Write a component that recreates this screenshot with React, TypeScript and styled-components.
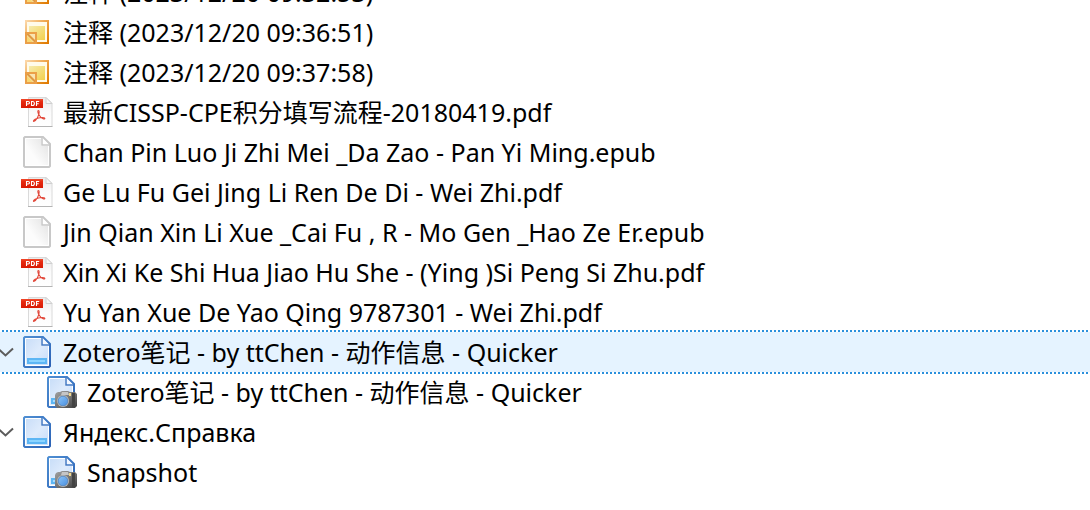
import React, { useState } from 'react';
import styled, { createGlobalStyle } from 'styled-components';

const GlobalStyle = createGlobalStyle`
  body {
    margin: 0;
    background: #fff;
    overflow: hidden;
  }
`;

const Tree = styled.ul`
  list-style: none;
  margin: -28px 0 0;
  padding: 0;
  color: #000;
  font-family: 'Noto Sans', 'Noto Sans CJK SC', sans-serif;
  font-size: 25px;
  line-height: 40px;
`;

const Row = styled.li<{ $level: number; $selected: boolean }>`
  display: flex;
  align-items: center;
  height: 40px;
  padding-left: ${({ $level }) => $level * 24}px;
  white-space: nowrap;
  background: ${({ $selected }) => ($selected ? '#e5f3ff' : 'transparent')};
  outline: ${({ $selected }) => ($selected ? '2px dotted #2b90dc' : 'none')};
`;

const ToggleSlot = styled.span`
  display: flex;
  flex: none;
  width: 21px;
`;

const Toggle = styled.button`
  display: flex;
  width: 16px;
  height: 16px;
  padding: 0;
  border: 0;
  background: none;
`;

const Icon = styled.svg`
  flex: none;
  width: 32px;
  height: 32px;
  margin-right: 10px;
`;

const Label = styled.span`
  flex: none;
`;

const Defs = styled.svg`
  display: block;
  width: 0;
  height: 0;
`;

const Gradients = () => (
  <Defs aria-hidden="true">
    <defs>
      <linearGradient id="noteFrame" x1="0" y1="0" x2="1" y2="1">
        <stop offset="0" stopColor="#fbd7a8" />
        <stop offset="0.5" stopColor="#eda044" />
        <stop offset="1" stopColor="#e07a00" />
      </linearGradient>
      <linearGradient id="noteFill" x1="0" y1="0" x2="1" y2="1">
        <stop offset="0" stopColor="#f6ecae" />
        <stop offset="1" stopColor="#f3d04c" />
      </linearGradient>
      <linearGradient id="pdfPage" x1="0" y1="0" x2="0" y2="1">
        <stop offset="0" stopColor="#e9e9ea" />
        <stop offset="0.5" stopColor="#fbfbfb" />
        <stop offset="1" stopColor="#ffffff" />
      </linearGradient>
      <linearGradient id="pdfRed" x1="0" y1="0" x2="0" y2="1">
        <stop offset="0" stopColor="#f04a2c" />
        <stop offset="0.3" stopColor="#e62a10" />
        <stop offset="1" stopColor="#d81a04" />
      </linearGradient>
      <linearGradient id="blankFill" x1="0.3" y1="0.6" x2="1" y2="0">
        <stop offset="0" stopColor="#fcfcfc" />
        <stop offset="1" stopColor="#e2e2e2" />
      </linearGradient>
      <linearGradient id="pageFill" x1="0" y1="0" x2="1" y2="1">
        <stop offset="0" stopColor="#c9def8" />
        <stop offset="0.5" stopColor="#deebfc" />
        <stop offset="1" stopColor="#c6dcfa" />
      </linearGradient>
      <linearGradient id="pageEdge" x1="0" y1="0" x2="1" y2="1">
        <stop offset="0" stopColor="#4f8fd3" />
        <stop offset="1" stopColor="#2b62b5" />
      </linearGradient>
      <linearGradient id="cameraBody" x1="0" y1="0" x2="1" y2="1">
        <stop offset="0" stopColor="#a3a3a3" />
        <stop offset="0.5" stopColor="#747474" />
        <stop offset="1" stopColor="#3c3c3c" />
      </linearGradient>
      <linearGradient id="lens" x1="0" y1="0" x2="1" y2="1">
        <stop offset="0" stopColor="#8cc4f8" />
        <stop offset="1" stopColor="#4a90e0" />
      </linearGradient>
    </defs>
  </Defs>
);

const NoteIcon = () => (
  <Icon viewBox="0 0 32 32" aria-hidden="true">
    <rect x="5" y="5" width="22" height="22" fill="#fffbea" stroke="url(#noteFrame)" strokeWidth="2" />
    <rect x="8" y="10" width="16" height="14" fill="url(#noteFill)" />
    <rect x="5" y="17" width="10" height="10" fill="#f9e3b0" stroke="#eb9f48" strokeWidth="2" />
    <path d="M6 18h2l6 6v2h-1l-7-7z" fill="#df9a40" />
    <path d="M6 20l6 6H6z" fill="#f7d873" />
  </Icon>
);

const PdfIcon = () => (
  <Icon viewBox="0 0 32 32" aria-hidden="true">
    <path d="M7.500 1.500H25l6 6v23H7.500z" fill="url(#pdfPage)" stroke="#dadada" />
    <path d="M25 1.500v6h6z" fill="#f7f7f7" stroke="#d0d0d0" />
    <path d="M7 30.500h24.500" stroke="#b4b4b4" />
    <rect x="0" y="3" width="22" height="9" fill="url(#pdfRed)" />
    <path
      d="M5.500 10V5.500H7.200q1.300 0 1.300 1.200T7.200 8H5.500M10.500 5.500v4h1q1.900 0 1.900-2t-1.900-2zM15.500 10V5.500h2.700M15.500 7.700h2.200"
      fill="none"
      stroke="#fff"
      strokeWidth="1.100"
    />
    <path
      d="M17.500 14.500c-1 0-.8 2 .3 4 1.200 2.200 2.800 4 4.700 4.500 1.800.4 1.900-1.200-.2-1.400-2.500-.3-5.700.4-8.200 1.700-2 1.100-2 2.400-1 2 1.500-.6 3.500-3.500 4.600-6.700.6-1.800.7-4.100-.2-4.100z"
      fill="none"
      stroke="#e2483a"
      strokeWidth="1.100"
    />
  </Icon>
);

const BlankIcon = () => (
  <Icon viewBox="0 0 32 32" aria-hidden="true">
    <path d="M4 1h18l7 7v22l-1 1H4l-1-1V2z" fill="#fff" stroke="#c8c8c8" strokeWidth="2" />
    <path d="M5 3h15v7h7v19H5z" fill="url(#blankFill)" />
    <path d="M21 2v7h7" fill="#fff" stroke="#c8c8c8" strokeWidth="1.500" />
  </Icon>
);

const PageShape = () => (
  <>
    <path d="M4 1h18l7 7v22l-1 1H4l-1-1V2z" fill="#fff" stroke="url(#pageEdge)" strokeWidth="2" />
    <path d="M5 3h15v7h7v19H5z" fill="url(#pageFill)" />
    <path d="M21 2v7h7" fill="#f4f8ff" stroke="#4178c4" strokeWidth="1.500" />
  </>
);

const WebPageIcon = () => (
  <Icon viewBox="0 0 32 32" aria-hidden="true">
    <PageShape />
    <rect x="6" y="22" width="20" height="6" fill="#5db6f4" />
    <rect x="8" y="24" width="16" height="2" fill="#8bd4ff" />
  </Icon>
);

const SnapshotIcon = () => (
  <Icon viewBox="0 0 32 32" aria-hidden="true">
    <PageShape />
    <rect x="6" y="22" width="6" height="6" fill="#5db6f4" />
    <rect x="8" y="24" width="4" height="2" fill="#a5dcff" />
    <path d="M11 17l2-1h2l2-1h6l2 1h5l2 2v12l-2 2H12l-2-2V19z" fill="url(#cameraBody)" />
    <path d="M17 16h6l1 3h-8z" fill="#c5c5c5" />
    <path d="M27 17h3v14h-3z" fill="#434343" />
    <rect x="24" y="17" width="2" height="3" fill="#f3d88a" />
    <circle cx="18" cy="25" r="6" fill="#bdbab5" />
    <circle cx="18" cy="25" r="4.800" fill="url(#lens)" stroke="#5c8cc4" />
  </Icon>
);

type Kind = 'note' | 'pdf' | 'blank' | 'page' | 'snapshot';

const icons: Record<Kind, React.FC> = {
  note: NoteIcon,
  pdf: PdfIcon,
  blank: BlankIcon,
  page: WebPageIcon,
  snapshot: SnapshotIcon,
};

interface Item {
  kind: Kind;
  title: string;
  children?: Item[];
}

const items: Item[] = [
  { kind: 'note', title: '注释 (2023/12/20 09:32:53)' },
  { kind: 'note', title: '注释 (2023/12/20 09:36:51)' },
  { kind: 'note', title: '注释 (2023/12/20 09:37:58)' },
  { kind: 'pdf', title: '最新CISSP-CPE积分填写流程-20180419.pdf' },
  { kind: 'blank', title: 'Chan Pin Luo Ji Zhi Mei _Da Zao - Pan Yi Ming.epub' },
  { kind: 'pdf', title: 'Ge Lu Fu Gei Jing Li Ren De Di - Wei Zhi.pdf' },
  { kind: 'blank', title: 'Jin Qian Xin Li Xue _Cai Fu , R - Mo Gen _Hao Ze Er.epub' },
  { kind: 'pdf', title: 'Xin Xi Ke Shi Hua Jiao Hu She - (Ying )Si Peng Si Zhu.pdf' },
  { kind: 'pdf', title: 'Yu Yan Xue De Yao Qing 9787301 - Wei Zhi.pdf' },
  {
    kind: 'page',
    title: 'Zotero笔记 - by ttChen - 动作信息 - Quicker',
    children: [{ kind: 'snapshot', title: 'Zotero笔记 - by ttChen - 动作信息 - Quicker' }],
  },
  { kind: 'page', title: 'Яндекс.Справка', children: [{ kind: 'snapshot', title: 'Snapshot' }] },
];

interface NodeProps {
  item: Item;
  level: number;
  path: string;
  selected: string;
  onSelect: (path: string) => void;
}

function TreeNode({ item, level, path, selected, onSelect }: NodeProps) {
  const [open, setOpen] = useState(true);
  const ItemIcon = icons[item.kind];
  return (
    <>
      <Row
        role="treeitem"
        aria-level={level + 1}
        aria-selected={selected === path}
        aria-expanded={item.children ? open : undefined}
        $level={level}
        $selected={selected === path}
        onClick={() => onSelect(path)}
      >
        <ToggleSlot>
          {item.children && (
            <Toggle type="button" aria-label={item.title} onClick={() => setOpen(!open)}>
              <svg width="16" height="16" viewBox="0 0 16 16" aria-hidden="true">
                <path d="M-2 4.500l7.500 7 7.500-7" fill="none" stroke="#5c5c5c" strokeWidth="2" />
              </svg>
            </Toggle>
          )}
        </ToggleSlot>
        <ItemIcon />
        <Label>{item.title}</Label>
      </Row>
      {open &&
        item.children?.map((child, i) => (
          <TreeNode
            key={child.title}
            item={child}
            level={level + 1}
            path={`${path}.${i}`}
            selected={selected}
            onSelect={onSelect}
          />
        ))}
    </>
  );
}

export default function App() {
  const [selected, setSelected] = useState('9');
  return (
    <>
      <GlobalStyle />
      <Gradients />
      <Tree role="tree">
        {items.map((item, i) => (
          <TreeNode key={item.title} item={item} level={0} path={`${i}`} selected={selected} onSelect={setSelected} />
        ))}
      </Tree>
    </>
  );
}
